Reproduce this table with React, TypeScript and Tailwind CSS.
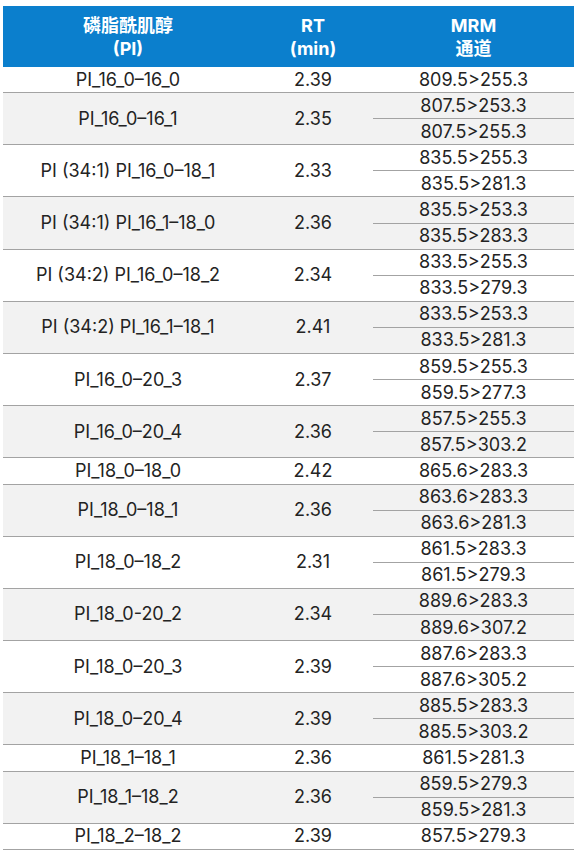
const rows: [string, string, string[]][] = [
  ["PI_16_0–16_0", "2.39", ["809.5>255.3"]],
  ["PI_16_0–16_1", "2.35", ["807.5>253.3", "807.5>255.3"]],
  ["PI (34:1) PI_16_0–18_1", "2.33", ["835.5>255.3", "835.5>281.3"]],
  ["PI (34:1) PI_16_1–18_0", "2.36", ["835.5>253.3", "835.5>283.3"]],
  ["PI (34:2) PI_16_0–18_2", "2.34", ["833.5>255.3", "833.5>279.3"]],
  ["PI (34:2) PI_16_1–18_1", "2.41", ["833.5>253.3", "833.5>281.3"]],
  ["PI_16_0–20_3", "2.37", ["859.5>255.3", "859.5>277.3"]],
  ["PI_16_0–20_4", "2.36", ["857.5>255.3", "857.5>303.2"]],
  ["PI_18_0–18_0", "2.42", ["865.6>283.3"]],
  ["PI_18_0–18_1", "2.36", ["863.6>283.3", "863.6>281.3"]],
  ["PI_18_0–18_2", "2.31", ["861.5>283.3", "861.5>279.3"]],
  ["PI_18_0-20_2", "2.34", ["889.6>283.3", "889.6>307.2"]],
  ["PI_18_0–20_3", "2.39", ["887.6>283.3", "887.6>305.2"]],
  ["PI_18_0–20_4", "2.39", ["885.5>283.3", "885.5>303.2"]],
  ["PI_18_1–18_1", "2.36", ["861.5>281.3"]],
  ["PI_18_1–18_2", "2.36", ["859.5>279.3", "859.5>281.3"]],
  ["PI_18_2–18_2", "2.39", ["857.5>279.3"]],
];

const font = { fontFamily: '"Inter", "Noto Sans CJK SC", sans-serif' };

function Row({ name, rt, mrm, shaded }: { name: string; rt: string; mrm: string[]; shaded: boolean }) {
  return (
    <div
      className={`grid grid-cols-[250px_120px_201px] border-b border-[#a3a3a3] ${
        shaded ? "bg-[#f2f2f2]" : "bg-white"
      }`}
    >
      <div className="flex items-center justify-center">{name}</div>
      <div className="flex items-center justify-center">{rt}</div>
      <div className="flex flex-col">
        {mrm.map((m, i) => (
          <div
            key={m + i}
            className={`h-[25.1px] flex items-center justify-center ${
              i < mrm.length - 1 ? "border-b border-[#a3a3a3] h-[26.1px]" : ""
            }`}
          >
            {m}
          </div>
        ))}
      </div>
    </div>
  );
}

export default function App() {
  return (
    <div className="bg-white min-h-[854px] pt-[6px] pl-[3px]" style={font}>
      <div className="w-[571px] text-[#232323] text-[18px] leading-none">
        <div className="grid grid-cols-[250px_120px_201px] h-[61px] bg-[#0b7fcd] text-white font-bold text-[18px] leading-[23px]">
          <div className="flex flex-col items-center justify-center">
            <span>磷脂酰肌醇</span>
            <span>(PI)</span>
          </div>
          <div className="flex flex-col items-center justify-center">
            <span>RT</span>
            <span>(min)</span>
          </div>
          <div className="flex flex-col items-center justify-center">
            <span>MRM</span>
            <span>通道</span>
          </div>
        </div>
        {rows.map(([n, rt, m], i) => (
          <Row key={n + i} name={n} rt={rt} mrm={m} shaded={i % 2 === 1} />
        ))}
      </div>
    </div>
  );
}
